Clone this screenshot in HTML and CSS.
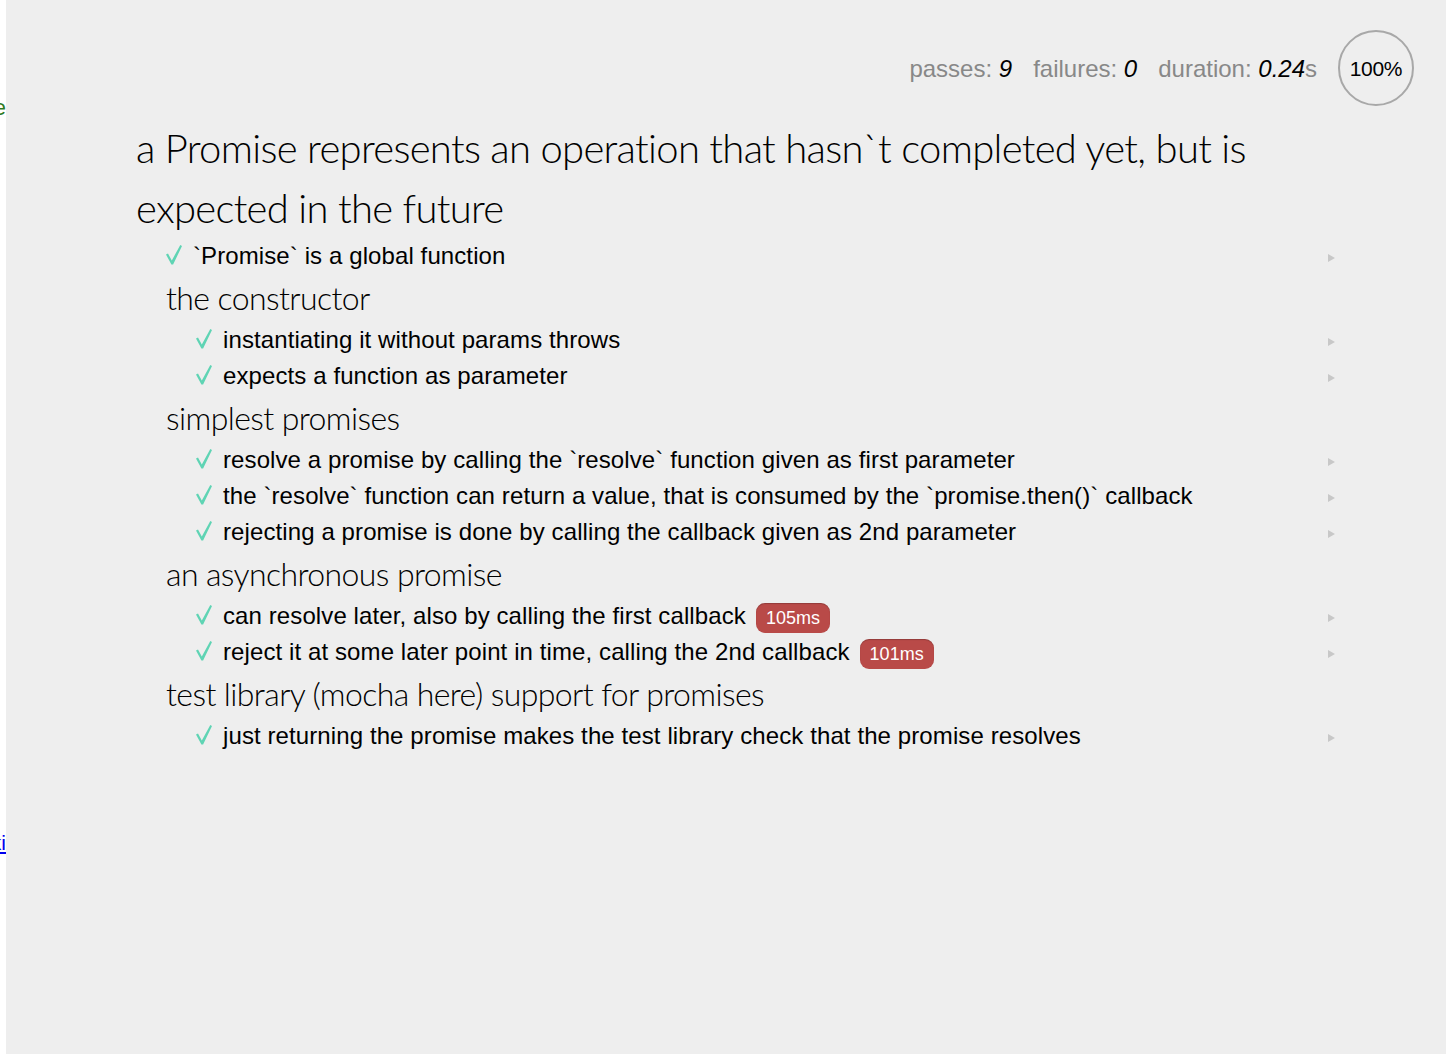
FILE: index.html
```html
<!DOCTYPE html>
<html lang="en">
<head>
<meta charset="utf-8">
<title>Promise tests</title>
<link rel="stylesheet" href="styles.css">
</head>
<body>
<aside class="side">
  <div class="side-line side-code"><span>code</span></div>
  <div class="side-line side-link"><a href="#">wiki</a></div>
</aside>
<main class="runner">
  <ul class="stats">
    <li class="stat">passes: <em>9</em></li>
    <li class="stat">failures: <em>0</em></li>
    <li class="stat">duration: <em>0.24</em>s</li>
    <li class="progress"><span>100%</span></li>
  </ul>
  <ul class="report">
    <li class="suite">
      <h1 class="suite-title">a Promise represents an operation that hasn`t completed yet, but is expected in the future</h1>
      <ul class="items">
        <li class="test"><h2 class="test-title"><svg class="check" viewBox="0 0 16 20" aria-hidden="true"><path d="M0 9.6 L2 8.6 L5.8 15.4 L14.3 0 L16 1 L7.1 19.6 L5.4 19.6 Z"/></svg>`Promise` is a global function</h2><a class="replay" href="#"></a></li>
        <li class="suite">
          <h1 class="suite-title sub">the constructor</h1>
          <ul class="items">
            <li class="test"><h2 class="test-title"><svg class="check" viewBox="0 0 16 20" aria-hidden="true"><path d="M0 9.6 L2 8.6 L5.8 15.4 L14.3 0 L16 1 L7.1 19.6 L5.4 19.6 Z"/></svg>instantiating it without params throws</h2><a class="replay" href="#"></a></li>
            <li class="test"><h2 class="test-title"><svg class="check" viewBox="0 0 16 20" aria-hidden="true"><path d="M0 9.6 L2 8.6 L5.8 15.4 L14.3 0 L16 1 L7.1 19.6 L5.4 19.6 Z"/></svg>expects a function as parameter</h2><a class="replay" href="#"></a></li>
          </ul>
        </li>
        <li class="suite">
          <h1 class="suite-title sub">simplest promises</h1>
          <ul class="items">
            <li class="test"><h2 class="test-title"><svg class="check" viewBox="0 0 16 20" aria-hidden="true"><path d="M0 9.6 L2 8.6 L5.8 15.4 L14.3 0 L16 1 L7.1 19.6 L5.4 19.6 Z"/></svg>resolve a promise by calling the `resolve` function given as first parameter</h2><a class="replay" href="#"></a></li>
            <li class="test"><h2 class="test-title"><svg class="check" viewBox="0 0 16 20" aria-hidden="true"><path d="M0 9.6 L2 8.6 L5.8 15.4 L14.3 0 L16 1 L7.1 19.6 L5.4 19.6 Z"/></svg>the `resolve` function can return a value, that is consumed by the `promise.then()` callback</h2><a class="replay" href="#"></a></li>
            <li class="test"><h2 class="test-title"><svg class="check" viewBox="0 0 16 20" aria-hidden="true"><path d="M0 9.6 L2 8.6 L5.8 15.4 L14.3 0 L16 1 L7.1 19.6 L5.4 19.6 Z"/></svg>rejecting a promise is done by calling the callback given as 2nd parameter</h2><a class="replay" href="#"></a></li>
          </ul>
        </li>
        <li class="suite">
          <h1 class="suite-title sub">an asynchronous promise</h1>
          <ul class="items">
            <li class="test"><h2 class="test-title"><svg class="check" viewBox="0 0 16 20" aria-hidden="true"><path d="M0 9.6 L2 8.6 L5.8 15.4 L14.3 0 L16 1 L7.1 19.6 L5.4 19.6 Z"/></svg>can resolve later, also by calling the first callback<span class="duration">105ms</span></h2><a class="replay" href="#"></a></li>
            <li class="test"><h2 class="test-title"><svg class="check" viewBox="0 0 16 20" aria-hidden="true"><path d="M0 9.6 L2 8.6 L5.8 15.4 L14.3 0 L16 1 L7.1 19.6 L5.4 19.6 Z"/></svg>reject it at some later point in time, calling the 2nd callback<span class="duration">101ms</span></h2><a class="replay" href="#"></a></li>
          </ul>
        </li>
        <li class="suite">
          <h1 class="suite-title sub">test library (mocha here) support for promises</h1>
          <ul class="items">
            <li class="test"><h2 class="test-title"><svg class="check" viewBox="0 0 16 20" aria-hidden="true"><path d="M0 9.6 L2 8.6 L5.8 15.4 L14.3 0 L16 1 L7.1 19.6 L5.4 19.6 Z"/></svg>just returning the promise makes the test library check that the promise resolves</h2><a class="replay" href="#"></a></li>
          </ul>
        </li>
      </ul>
    </li>
  </ul>
</main>
</body>
</html>
```
FILE: styles.css
```css
html, body {
  margin: 0;
  padding: 0;
}
body {
  display: flex;
  min-height: 1054px;
  background: #ffffff;
  font-family: "Liberation Sans", Arial, sans-serif;
}
ul {
  list-style: none;
  margin: 0;
  padding: 0;
}

/* left, clipped pane */
.side {
  width: 6px;
  flex: none;
  overflow: hidden;
  background: #ffffff;
  display: flex;
  flex-direction: column;
}
.side-line {
  display: flex;
  justify-content: flex-end;
  white-space: nowrap;
  font-size: 22px;
  line-height: 24px;
}
.side-code {
  margin-top: 96px;
  color: #2e7a1f;
}
.side-link {
  margin-top: 711px;
  font-size: 21px;
}
.side-link a {
  color: #0000ee;
  text-decoration: underline;
}

/* runner */
.runner {
  flex: 1;
  background: #eeeeee;
  color: #000;
}
.stats {
  display: flex;
  justify-content: flex-end;
  align-items: center;
  padding: 30px 32px 0 0;
  font-size: 24px;
  color: #888888;
}
.stat {
  margin-right: 21px;
  line-height: 30px;
  padding-top: 2px;
}
.stat em {
  color: #000;
  font-style: italic;
}
.progress {
  width: 72px;
  height: 72px;
  border: 2px solid #a8a8a8;
  border-radius: 50%;
  display: flex;
  align-items: center;
  justify-content: center;
  font-size: 21px;
  color: #000;
  letter-spacing: -0.3px;
}
.progress span {
  padding-top: 1px;
}

.report {
  margin-top: 12px;
  padding: 0 100px;
}
.suite {
  margin-left: 30px;
}
.suite-title {
  margin: 0;
  font-family: Lato, "Liberation Sans", sans-serif;
  font-weight: 300;
  font-size: 40px;
  line-height: 60px;
  letter-spacing: -0.7px;
  color: #000;
}
.suite-title.sub {
  font-size: 32px;
  line-height: 48px;
  letter-spacing: -0.6px;
}
.test {
  margin-left: 30px;
  display: flex;
  align-items: flex-start;
}
.test-title {
  flex: 1;
  margin: 0;
  font-size: 24px;
  line-height: 36px;
  font-weight: normal;
  letter-spacing: 0.1px;
  color: #000;
}
.check {
  display: inline-block;
  width: 16px;
  height: 20px;
  margin-right: 11px;
  vertical-align: -1px;
  fill: #5fd4b4;
}
.duration {
  display: inline-block;
  margin-left: 10px;
  padding: 4px 10px;
  font-size: 18px;
  line-height: 22px;
  letter-spacing: 0;
  color: #fff;
  background: #b94a48;
  border-radius: 9px;
  box-shadow: inset 0 1px 1px rgba(0, 0, 0, 0.2);
  vertical-align: middle;
}
.replay {
  flex: none;
  width: 0;
  height: 0;
  margin: 16px 11px 0 0;
  border-left: 7px solid #c8c8c8;
  border-top: 4px solid transparent;
  border-bottom: 4px solid transparent;
}
```
